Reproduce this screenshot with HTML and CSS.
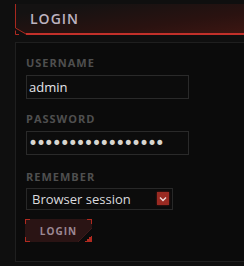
FILE: index.html
```html
<!DOCTYPE html>
<html>
<head>
<meta charset="utf-8">
<link rel="stylesheet" href="styles.css">
</head>
<body>
<div class="login">
  <div class="login-header">
    <svg class="header-lines" width="229" height="31" viewBox="0 0 229 31">
      <path d="M0.5 0 V24 L11 30" fill="none" stroke="#a8281f" stroke-width="1"/>
      <rect x="11" y="29" width="218" height="2" fill="#c2302a"/>
      <path d="M0.5 26.5 V30.5 H4" fill="none" stroke="#b02a22" stroke-width="1"/>
    </svg>
    <h1 class="header-title">LOGIN</h1>
  </div>
  <form class="login-panel">
    <label class="field-label" for="username">USERNAME</label>
    <input class="text-input" id="username" type="text" value="admin">
    <label class="field-label" for="password">PASSWORD</label>
    <input class="text-input password" id="password" type="password" value="passwordpassword1">
    <label class="field-label remember-label" for="remember">REMEMBER</label>
    <div class="select-wrap">
      <select class="select-input" id="remember">
        <option>Browser session</option>
      </select>
      <span class="select-arrow">
        <svg width="8" height="6" viewBox="0 0 8 6"><path d="M1 1.5 L4 4.5 L7 1.5" fill="none" stroke="#f0dede" stroke-width="1.4"/></svg>
      </span>
    </div>
    <button class="login-button" type="button">LOGIN</button>
  </form>
</div>
</body>
</html>
```
FILE: styles.css
```css
html, body {
  margin: 0;
  padding: 0;
}
body {
  background: #0f0f0f;
  font-family: "Open Sans", "DejaVu Sans", sans-serif;
  overflow: hidden;
  width: 244px;
  height: 266px;
}
.login {
  width: 229px;
  margin: 4px 0 0 15px;
}
.login-header {
  position: relative;
  height: 31px;
  display: flex;
  align-items: center;
  padding: 0 0 2px 15px;
  box-sizing: border-box;
}
.login-header::before {
  content: "";
  position: absolute;
  inset: 0;
  background: linear-gradient(172deg, #141212 15%, #2a1210 65%, #3e1612 100%);
  clip-path: polygon(0 0, 100% 0, 100% 100%, 11px 100%, 0 24px);
}
.header-lines {
  position: absolute;
  left: 0;
  top: 0;
}
.header-title {
  position: relative;
  margin: 0;
  font-size: 14px;
  line-height: 20px;
  font-weight: 600;
  letter-spacing: 1px;
  color: #bdb3c0;
}
.login-panel {
  margin: 7px 0 0 0;
  border: 1px solid #1f1f1f;
  border-right: none;
  background: #0b0b0b;
  padding: 12px 10px 19px 10px;
  display: flex;
  flex-direction: column;
  align-items: flex-start;
}
.field-label {
  font-size: 11px;
  line-height: 15px;
  font-weight: 700;
  letter-spacing: 1px;
  color: #4f4f4f;
  margin-bottom: 5px;
}
.text-input {
  box-sizing: border-box;
  width: 163px;
  height: 24px;
  margin: 0 0 12px 0;
  padding: 0 2px;
  background: #0c0c0c;
  border: 1px solid #2a2a2a;
  color: #e4e4ea;
  font-family: "Open Sans", sans-serif;
  font-size: 13px;
  outline: none;
}
.text-input.password {
  font-family: "DejaVu Sans", sans-serif;
  font-size: 17px;
  letter-spacing: -2.1px;
  padding-left: 1px;
  color: #d8d6d0;
  margin-bottom: 14px;
}
.remember-label {
  margin-bottom: 3px;
}
.select-wrap {
  position: relative;
  width: 147px;
  height: 22px;
  margin-bottom: 10px;
}
.select-input {
  appearance: none;
  -webkit-appearance: none;
  box-sizing: border-box;
  width: 100%;
  height: 100%;
  margin: 0;
  padding: 0 0 0 5px;
  background: #0c0c0c;
  border: 1px solid #282828;
  color: #dadade;
  font-family: "Open Sans", sans-serif;
  font-size: 13px;
  outline: none;
  border-radius: 0;
}
.select-arrow {
  position: absolute;
  right: 4px;
  top: 5px;
  width: 12px;
  height: 13px;
  background: #9a2a22;
  box-shadow: 0 0 2px #6a1a14;
  display: flex;
  align-items: center;
  justify-content: center;
  pointer-events: none;
}
.login-button {
  width: 67px;
  height: 23px;
  margin: 0 0 0 -1px;
  padding: 0;
  border: none;
  color: #9c8893;
  font-family: "Open Sans", sans-serif;
  font-size: 10px;
  font-weight: 700;
  letter-spacing: 1px;
  background:
    linear-gradient(#b02a20, #b02a20) left top / 5px 1px no-repeat,
    linear-gradient(#b02a20, #b02a20) left top / 1px 5px no-repeat,
    linear-gradient(#b02a20, #b02a20) right top / 5px 1px no-repeat,
    linear-gradient(#b02a20, #b02a20) right top / 1px 5px no-repeat,
    linear-gradient(#b02a20, #b02a20) left bottom / 5px 1px no-repeat,
    linear-gradient(#b02a20, #b02a20) left bottom / 1px 5px no-repeat,
    linear-gradient(135deg, transparent 50%, #b02a20 50%) right bottom / 7px 7px no-repeat,
    linear-gradient(135deg, transparent calc(50% - 0.7px), #3c1a1a calc(50% - 0.7px), #3c1a1a calc(50% + 0.7px), #0b0b0b calc(50% + 0.7px)) right bottom / 14px 14px no-repeat,
    #2a1414;
}
```
